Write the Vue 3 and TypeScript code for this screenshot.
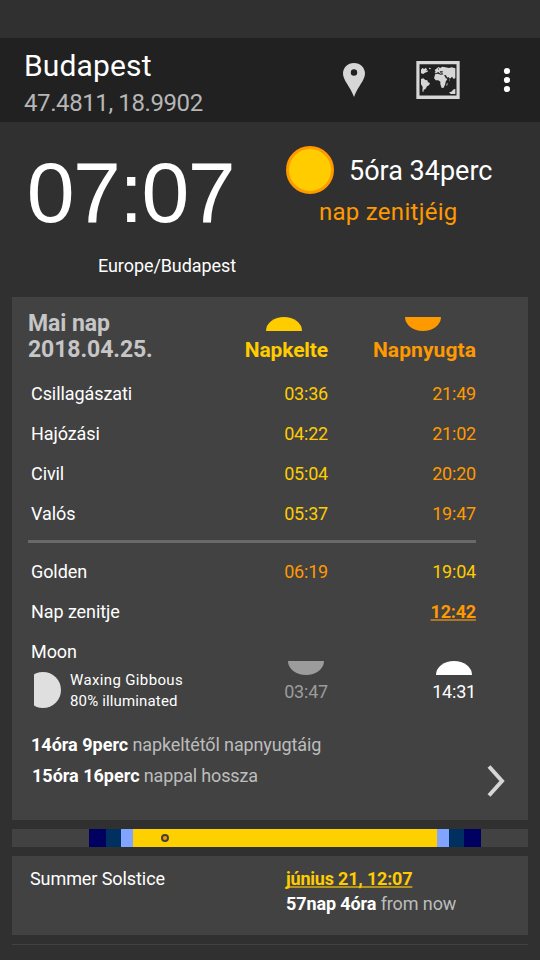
<script setup lang="ts">
interface TimeRow {
  label: string
  rise: string
  set: string
}

interface Segment {
  width: number
  color: string
}

const twilight: TimeRow[] = [
  { label: 'Csillagászati', rise: '03:36', set: '21:49' },
  { label: 'Hajózási', rise: '04:22', set: '21:02' },
  { label: 'Civil', rise: '05:04', set: '20:20' },
  { label: 'Valós', rise: '05:37', set: '19:47' },
]

const segments: Segment[] = [
  { width: 77, color: '#424242' },
  { width: 17, color: '#000060' },
  { width: 15, color: '#003060' },
  { width: 12, color: '#80a4ff' },
  { width: 304, color: '#ffd000' },
  { width: 12, color: '#80a4ff' },
  { width: 15, color: '#003060' },
  { width: 17, color: '#000060' },
  { width: 47, color: '#424242' },
]
</script>

<template>
  <div class="screen">
    <header class="bar">
      <div class="place">
        <div class="city">Budapest</div>
        <div class="coords">47.4811, 18.9902</div>
      </div>
      <svg class="pin" viewBox="0 0 22 34">
        <path fill-rule="evenodd" d="M11 0C4.800 0 0 4.600 0 10.600C0 17.500 7.200 23.500 11 34C14.800 23.500 22 17.500 22 10.600C22 4.600 17.200 0 11 0ZM11 6.300a3.200 3.200 0 1 1 0 6.400a3.200 3.200 0 1 1 0-6.400Z" />
      </svg>
      <svg class="map" viewBox="18 18 132 114">
        <path fill-rule="evenodd" d="M19 18H149V132H19ZM28.500 28V121.500H139.500V28Z" />
        <path d="M33 44L37 39L43 42L47 38L51 43L49 48L54 46L53 50L45 53L40 57L33 55Z" />
        <path d="M33 72L40 70L46 75L52 76L54 82L60 84L57 91L51 94L47 101L41 105L40 112L37 109L38 96L33 88Z" />
        <path d="M73 54L77 51L74 45L79 41L85 36L91 39L97 35L106 37L117 39L125 37L136 40V69L131 72L126 65L120 71L115 66L112 68L108 61L99 59L98 54L91 56L85 51L78 55Z" />
        <path d="M76 57L84 56L92 59L101 58L107 69L112 72L107 80L106 87L101 98L95 99L91 88L91 80L85 76L77 76L72 69Z" />
        <path d="M110 86L113 83L112 91L109 93ZM136 102V117H122L117 112L124 110L131 103ZM117 72L119 76L117 78Z" />
        <path d="M57 38L63 40L61 43L57 41Z" />
        <path class="sea" d="M89 49L98 49L99 52L91 53ZM84 43L87 39L87 44Z" />
      </svg>
      <svg class="more" viewBox="0 0 6 24">
        <circle cx="3" cy="3" r="3.100" /><circle cx="3" cy="12" r="3.100" /><circle cx="3" cy="21" r="3.100" />
      </svg>
    </header>

    <section class="now">
      <div class="clock">
        <div class="time">07:07</div>
        <div class="zone">Europe/Budapest</div>
      </div>
      <div class="next">
        <div class="countdown"><span class="sun"></span><span class="remain">5óra 34perc</span></div>
        <div class="event">nap zenitjéig</div>
      </div>
    </section>

    <main class="card today">
      <div class="row head">
        <div class="date">Mai nap<br />2018.04.25.</div>
        <div class="col1 rise">
          <i class="half up"></i>
          <span class="label">Napkelte</span>
        </div>
        <div class="col2 set">
          <i class="half down"></i>
          <span class="label wide">Napnyugta</span>
        </div>
      </div>
      <div v-for="row in twilight" :key="row.label" class="row">
        <span class="name">{{ row.label }}</span>
        <span class="col1 rise">{{ row.rise }}</span>
        <span class="col2 set">{{ row.set }}</span>
      </div>
      <div class="rule"></div>
      <div class="row">
        <span class="name">Golden</span>
        <span class="col1 set">06:19</span>
        <span class="col2 rise">19:04</span>
      </div>
      <div class="row">
        <span class="name">Nap zenitje</span>
        <span class="col2 set"><b class="noon">12:42</b></span>
      </div>
      <div class="moon">
        <div class="moon-info">
          <div class="name moon-title">Moon</div>
          <div class="phase">
            <svg class="disc" viewBox="0 0 27 36"><circle cx="9" cy="18" r="18" /></svg>
            <div class="phase-text">Waxing Gibbous<br /><span class="percent">80% illuminated</span></div>
          </div>
        </div>
        <div class="col1 moonset"><i class="half down"></i><span>03:47</span></div>
        <div class="col2 moonrise"><i class="half up"></i><span>14:31</span></div>
      </div>
      <div class="foot">
        <div class="lengths">
          <div><b>14óra 9perc</b> napkeltétől napnyugtáig</div>
          <div class="daylight"><b>15óra 16perc</b> nappal hossza</div>
        </div>
        <svg class="chevron" viewBox="0 0 18 32"><path d="M2 1.500L15 16L2 30.500" /></svg>
      </div>
    </main>

    <div class="daybar">
      <div v-for="(s, i) in segments" :key="i" :style="{ width: s.width + 'px', background: s.color }"></div>
      <i class="marker"></i>
    </div>

    <section class="card solstice">
      <div class="season">Summer Solstice</div>
      <div class="when">
        <div><b class="moment">június 21, 12:07</b></div>
        <div class="until"><b>57nap 4óra</b> from now</div>
      </div>
    </section>
    <div class="card peek"></div>
  </div>
</template>

<style>
body {
  background: #303030;
}
</style>

<style scoped>
.screen {
  width: 540px;
  height: 960px;
  overflow: hidden;
  box-sizing: border-box;
  padding-top: 38px;
  background: #303030;
  color: #fff;
  font-family: Roboto, "Liberation Sans", sans-serif;
  font-size: 18px;
  letter-spacing: -0.08px;
  white-space: nowrap;
}
.bar {
  display: flex;
  height: 84px;
  background: #212121;
  fill: #d6d6d6;
}
.place {
  width: 319px;
  padding: 9px 0 0 24px;
}
.city {
  font-size: 30px;
  line-height: 37px;
  letter-spacing: 0.15px;
}
.coords {
  font-size: 24px;
  line-height: 38px;
  letter-spacing: -0.4px;
  color: #b6b6b6;
}
.pin {
  width: 22px;
  height: 34px;
  margin-top: 25px;
}
.map {
  width: 44px;
  height: 38px;
  margin: 23px 0 0 51px;
}
.sea {
  fill: #212121;
}
.more {
  width: 6px;
  height: 24px;
  margin: 30px 0 0 44px;
  fill: #fff;
  overflow: visible;
}
.now {
  display: flex;
  height: 175px;
}
.clock {
  width: 236px;
  padding-right: 50px;
  text-align: right;
}
.time {
  padding: 20px 2px 0 0;
  font-family: "Liberation Sans", Arial, sans-serif;
  font-size: 86px;
  line-height: 100px;
  letter-spacing: -1.6px;
}
.zone {
  padding-top: 12px;
  line-height: 24px;
}
.countdown {
  display: flex;
  align-items: center;
  margin-top: 24px;
}
.sun {
  box-sizing: border-box;
  width: 48px;
  height: 48px;
  border: 3px solid #ff9900;
  border-radius: 50%;
  background: #ffcc00;
}
.remain {
  margin-left: 15px;
  padding-top: 2px;
  font-size: 27px;
  letter-spacing: 0;
}
.event {
  margin-left: 33px;
  font-size: 24px;
  line-height: 36px;
  letter-spacing: 0.28px;
  color: #ff9900;
}
.card {
  box-sizing: border-box;
  width: 516px;
  margin-left: 12px;
  background: #424242;
}
.today {
  height: 523px;
  padding: 0 52px 0 16px;
}
.row {
  display: flex;
  line-height: 40px;
}
.head {
  height: 77px;
  font-weight: 700;
  line-height: 26px;
}
.date {
  margin-top: 14px;
  font-size: 23px;
  color: #c6c6c6;
}
.name {
  padding-left: 3px;
}
.col1 {
  width: 100px;
  margin-left: auto;
  text-align: right;
  letter-spacing: -0.2px;
}
.col2 {
  width: 148px;
  text-align: right;
  letter-spacing: -0.2px;
}
.name + .col2 {
  margin-left: auto;
}
.rise {
  color: #ffcc00;
}
.set {
  color: #ff9900;
}
.half {
  display: block;
  width: 36px;
  height: 14px;
  background: currentColor;
}
.up {
  border-radius: 18px 18px 0 0 / 14px 14px 0 0;
}
.down {
  border-radius: 0 0 18px 18px / 0 0 14px 14px;
}
.head .half {
  margin: 20px 0 6px auto;
}
.head .up {
  margin-right: 26px;
}
.head .down {
  margin-right: 35px;
}
.label {
  font-size: 21px;
  letter-spacing: -0.12px;
}
.label.wide {
  letter-spacing: 0.08px;
}
.rule {
  height: 3px;
  margin: 6px 0 9px;
  background: #696969;
}
.noon,
.moment {
  text-decoration: underline;
  text-decoration-thickness: 2px;
  text-underline-offset: 1px;
  text-decoration-skip-ink: none;
}
.noon {
  text-decoration-color: #b17424;
}
.moon {
  display: flex;
  height: 97px;
}
.moon-title {
  line-height: 40px;
}
.phase {
  display: flex;
  margin-left: 6px;
}
.disc {
  width: 27px;
  height: 36px;
  fill: #dfdfdf;
}
.phase-text {
  margin: -2px 0 0 9px;
  font-size: 15px;
  line-height: 21px;
  letter-spacing: 0.36px;
}
.percent {
  letter-spacing: 0.15px;
}
.moonset,
.moonrise {
  padding-top: 29px;
  line-height: 34px;
}
.moonset .half,
.moonrise .half {
  margin: 0 4px 0 auto;
}
.moonset {
  color: #9c9c9c;
}
.foot {
  display: flex;
  justify-content: space-between;
  margin-right: -29px;
  color: #bdbdbd;
  line-height: 31px;
}
.lengths {
  padding-left: 3px;
  letter-spacing: -0.12px;
}
.lengths b {
  letter-spacing: 0;
}
.lengths b,
.until b {
  color: #fff;
}
.daylight {
  padding-left: 1px;
  letter-spacing: -0.16px;
}
.chevron {
  width: 18px;
  height: 32px;
  margin-top: 36px;
  fill: none;
  stroke: #d6d6d6;
  stroke-width: 4;
}
.daybar {
  position: relative;
  display: flex;
  width: 516px;
  height: 18px;
  margin: 9px 0 9px 12px;
}
.marker {
  position: absolute;
  left: 149px;
  top: 5px;
  box-sizing: border-box;
  width: 8px;
  height: 8px;
  border: 2px solid #424242;
  border-radius: 50%;
  background: #ff9900;
}
.solstice {
  display: flex;
  height: 79px;
  padding: 10px 0 0 18px;
  line-height: 25px;
}
.season {
  width: 256px;
}
.moment {
  letter-spacing: -0.19px;
  color: #ffcc00;
  text-decoration-color: #b1931e;
}
.until {
  letter-spacing: -0.11px;
  color: #bdbdbd;
}
.peek {
  height: 1px;
  margin-top: 9px;
}
</style>
